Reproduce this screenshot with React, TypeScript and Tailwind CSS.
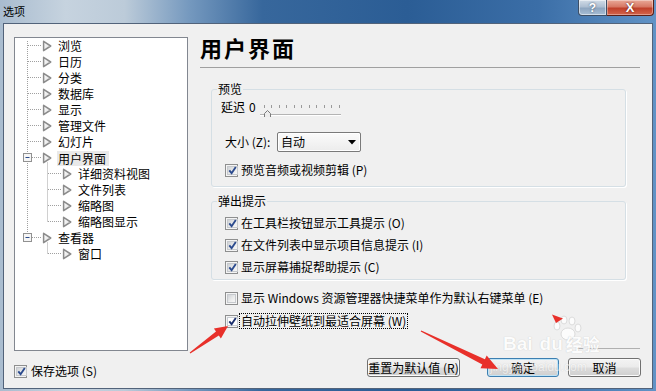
import React from "react";

type Row = { t: string; l: number; sel?: boolean };

const rows: Row[] = [
  { t: "浏览", l: 0 },
  { t: "日历", l: 0 },
  { t: "分类", l: 0 },
  { t: "数据库", l: 0 },
  { t: "显示", l: 0 },
  { t: "管理文件", l: 0 },
  { t: "幻灯片", l: 0 },
  { t: "用户界面", l: 0, sel: true },
  { t: "详细资料视图", l: 1 },
  { t: "文件列表", l: 1 },
  { t: "缩略图", l: 1 },
  { t: "缩略图显示", l: 1 },
  { t: "查看器", l: 0 },
  { t: "窗口", l: 1 },
];

function Tri() {
  return (
    <svg width="10" height="12" viewBox="0 0 10 12" className="shrink-0">
      <defs>
        <linearGradient id="triG" x1="0" y1="0" x2="1" y2="1">
          <stop offset="0" stopColor="#ffffff" />
          <stop offset="1" stopColor="#dcdcdc" />
        </linearGradient>
      </defs>
      <path
        d="M1.6 1.3 L8.7 6 L1.6 10.7 Z"
        fill="url(#triG)"
        stroke="#8c8c8c"
        strokeWidth="1.5"
        strokeLinejoin="round"
      />
    </svg>
  );
}

function TreeLines() {
  const rootRows = [0, 1, 2, 3, 4, 5, 6, 7, 12];
  const childRows = [8, 9, 10, 11, 13];
  const c = (i: number) => i * 16 + 7.5;
  return (
    <svg width="172" height="312" className="absolute left-0 top-0 pointer-events-none">
      <g stroke="#a0a0a0" strokeWidth="1" strokeDasharray="1 1" fill="none">
        <line x1="12.5" y1="3" x2="12.5" y2={c(12)} />
        {rootRows.map((i) => (
          <line key={"r" + i} x1="13" y1={c(i)} x2="26" y2={c(i)} />
        ))}
        <line x1="32.5" y1={c(7) + 5} x2="32.5" y2={c(11)} />
        <line x1="32.5" y1={c(12) + 5} x2="32.5" y2={c(13)} />
        {childRows.map((i) => (
          <line key={"c" + i} x1="33" y1={c(i)} x2="46" y2={c(i)} />
        ))}
      </g>
      {[7, 12].map((i) => (
        <g key={"m" + i}>
          <rect x="8.5" y={c(i) - 4} width="8" height="8" fill="#f6f6f6" stroke="#919191" />
          <line x1="10.5" y1={c(i)} x2="14.5" y2={c(i)} stroke="#2a4a8a" />
        </g>
      ))}
    </svg>
  );
}

function Check({ checked = true, white = false }: { checked?: boolean; white?: boolean }) {
  return (
    <span className="w-[13px] h-[13px] shrink-0 border border-[#8e8f8f] bg-[#f4f4f4] p-[1px] flex">
      <span
        className={
          white
            ? "flex-1 flex items-center justify-center bg-white border border-[#c8cdd3]"
            : "flex-1 flex items-center justify-center bg-[linear-gradient(135deg,#cfd2d6_0%,#eceded_60%,#f6f6f6_100%)] border border-[#c6c9cd]"
        }
      >
        {checked && (
          <svg width="9" height="9" viewBox="0 0 9 9" className="shrink-0">
            <path
              d="M1.3 4.4 L3.6 7.2 L7.8 1"
              fill="none"
              stroke={white ? "#1b2f6d" : "#2c4b8e"}
              strokeWidth="1.9"
            />
          </svg>
        )}
      </span>
    </span>
  );
}

function Group({ title, className, children }: { title: string; className: string; children: React.ReactNode }) {
  return (
    <fieldset
      className={
        "ml-[11px] w-[415px] border border-[#d5dfe5] rounded-[3px] shadow-[1px_1px_0_#ffffff] " + className
      }
    >
      <legend className="ml-[5px] px-[1px] text-[12px] leading-[14px]">{title}</legend>
      {children}
    </fieldset>
  );
}

function Btn({ children, w, def = false }: { children: React.ReactNode; w: string; def?: boolean }) {
  return (
    <div
      className={
        (def
          ? "border-[#3c7fb1] shadow-[inset_0_0_0_1px_#bfe4f7] "
          : "border-[#707070] shadow-[inset_0_0_0_1px_#fbfbfb] ") +
        w +
        " h-[19px] rounded-[3px] border bg-[linear-gradient(#f3f3f3_0%,#ebebeb_48%,#dddddd_52%,#cfcfcf_100%)] flex items-center justify-center text-[12px] leading-none"
      }
    >
      {children}
    </div>
  );
}

function Slider() {
  const ticks = Array.from({ length: 11 }, (_, k) => 4.5 + k * 7.5);
  return (
    <svg width="84" height="20" viewBox="0 0 84 20" className="shrink-0">
      {ticks.map((x, k) => (
        <line key={k} x1={Math.round(x) + 0.5} y1="8" x2={Math.round(x) + 0.5} y2="11" stroke="#9a9a9a" />
      ))}
      <line x1="1" y1="17.5" x2="82" y2="17.5" stroke="#b4b4b4" />
      <line x1="1" y1="18.5" x2="82" y2="18.5" stroke="#ffffff" />
      <path d="M5.5 20.5 L5.5 16.5 L8.5 13.5 L11.5 16.5 L11.5 20.5 Z" fill="#ececec" stroke="#7a7a7a" />
    </svg>
  );
}

function Arrows() {
  return (
    <svg width="656" height="391" className="absolute left-0 top-0 pointer-events-none">
      <polygon
        points="190.3,353.4 218.8,335.5 220.9,338.4 228,326 213.9,328.6 216,331.5 189.7,352.6"
        fill="#e8302a"
      />
      <polygon
        points="421.3,330.4 484.9,359.2 486.7,355.6 498,369 480.5,368.2 482.3,364.6 420.7,331.6"
        fill="#e8302a"
      />
      <polygon points="552,314.5 563,318.5 556,323" fill="#e8302a" />
    </svg>
  );
}

function Watermark() {
  return (
    <div className="absolute left-[503px] top-[314px] pointer-events-none text-white opacity-80">
      <svg width="40" height="28" viewBox="0 0 40 28" className="absolute left-[42px] top-0">
        <g fill="#ffffff" stroke="#d8d8d8" strokeWidth="1">
          <ellipse cx="12" cy="12" rx="3" ry="4" />
          <ellipse cx="19" cy="6" rx="3" ry="4" />
          <ellipse cx="27" cy="7" rx="3" ry="4" />
          <ellipse cx="33" cy="14" rx="3" ry="4" />
          <ellipse cx="23" cy="20" rx="7" ry="6" />
        </g>
      </svg>
      <div className="absolute left-0 top-[20px] flex items-end whitespace-nowrap [text-shadow:0_0_1px_#b8b8b8]">
        <span className="font-['Liberation_Sans',sans-serif] font-bold text-[19px] leading-[20px]">Bai</span>
        <span className="ml-[7px] font-['Liberation_Sans',sans-serif] font-bold text-[19px] leading-[20px]">du</span>
        <span className="ml-[3px] text-[17px] leading-[20px] font-bold">经验</span>
      </div>
      <div className="absolute left-[-13px] top-[46px] whitespace-nowrap font-['Liberation_Sans',sans-serif] text-[12px] leading-[14px] opacity-70 [text-shadow:0_0_1px_#b0b0b0]">
        jingyan.baidu.com
      </div>
    </div>
  );
}

export default function App() {
  return (
    <div className="relative w-[656px] h-[391px] overflow-hidden flex flex-col font-['Noto_Sans_CJK_SC','Liberation_Sans',sans-serif] text-[12px] text-black bg-[linear-gradient(90deg,#a9bccf_0%,#c6d3df_10%,#bccbd9_19%,#7498be_29%,#37679c_40%,#2b5d95_62%,#3b6ea7_82%,#6193c6_100%)]">
      {/* title bar */}
      <div className="h-[23px] shrink-0 flex items-start justify-between">
        <div className="pl-[3px] pt-[3px] text-[11px] leading-[16px]">选项</div>
        <div className="flex mr-[2px]">
          <div className="w-[29px] h-[16px] border border-[#3d4f66] border-t-0 rounded-bl-[4px] bg-[linear-gradient(#d2dce7_0%,#aebfd2_45%,#8ea6c0_55%,#a7bdd4_100%)] shadow-[inset_0_0_0_1px_rgba(255,255,255,0.5)] flex items-center justify-center text-white font-bold text-[12px] leading-none font-['Liberation_Sans',sans-serif] [text-shadow:0_0_2px_#33475e]">
            ?
          </div>
          <div className="w-[47px] h-[16px] border border-[#5a1f16] border-t-0 border-l-0 rounded-br-[4px] bg-[linear-gradient(#e9a998_0%,#d77864_45%,#c0402a_55%,#d3654c_100%)] shadow-[inset_0_0_0_1px_rgba(255,255,255,0.35)] flex items-center justify-center text-white font-bold text-[13px] leading-none font-['Liberation_Sans',sans-serif] [text-shadow:0_0_2px_#4a130b]">
            X
          </div>
        </div>
      </div>

      {/* body */}
      <div className="mx-[3px] h-[366px] shrink-0 border border-[#52637a] bg-[#f0f0f0] flex">
        {/* left column */}
        <div className="pl-[10px] pt-[13px] flex flex-col">
          <div className="relative w-[174px] h-[314px] border border-[#828790] bg-white">
            <TreeLines />
            <div className="relative flex flex-col">
              {rows.map((r, i) => (
                <div
                  key={i}
                  className={(r.l === 0 ? "pl-[27px]" : "pl-[47px]") + " h-[16px] flex items-center whitespace-nowrap"}
                >
                  <Tri />
                  {r.sel ? (
                    <span className="ml-[5px] pl-[1px] pr-[3px] h-[15px] bg-[#e9e9e9] leading-[15px]">{r.t}</span>
                  ) : (
                    <span className="ml-[6px] leading-[16px]">{r.t}</span>
                  )}
                </div>
              ))}
            </div>
          </div>
          <div className="mt-[12px] h-[16px] flex items-center">
            <Check />
            <span className="ml-[4px] leading-[16px]">保存选项 (S)</span>
          </div>
        </div>

        {/* right column */}
        <div className="ml-[12px] pt-[11px] w-[441px] flex flex-col">
          <div className="h-[24px] text-[22px] leading-[24px] font-bold tracking-[2px]">用户界面</div>
          <div className="mt-[8px] h-px w-[440px] bg-[#a0a0a0]" />

          <Group title="预览" className="mt-[14px]">
            <div className="pl-[9px] pt-[1px] pb-[8px] flex flex-col">
              <div className="h-[20px] flex items-center">
                <span className="leading-[16px]">延迟</span>
                <span className="ml-[4px] leading-[16px]">0</span>
                <span className="ml-[3px] flex">
                  <Slider />
                </span>
              </div>
              <div className="mt-[15px] h-[20px] flex items-center pl-[4px]">
                <span className="w-[52px] leading-[16px] whitespace-nowrap">大小 (Z):</span>
                <div className="w-[84px] h-[20px] border border-[#7a7a7a] rounded-[2px] bg-[linear-gradient(#fbfbfb,#ececec)] shadow-[inset_0_0_0_1px_#ffffff] flex items-center justify-between pl-[3px] pr-[4px]">
                  <span className="leading-[16px]">自动</span>
                  <svg width="8" height="5" viewBox="0 0 8 5">
                    <path d="M0 0 L8 0 L4 4.5 Z" fill="#000" />
                  </svg>
                </div>
              </div>
              <div className="mt-[10px] h-[16px] flex items-center pl-[4px]">
                <Check />
                <span className="ml-[3px] leading-[16px]">预览音频或视频剪辑 (P)</span>
              </div>
            </div>
          </Group>

          <Group title="弹出提示" className="mt-[7px]">
            <div className="pl-[13px] pt-[4px] pb-[1px] flex flex-col">
              <div className="h-[22px] flex items-center">
                <Check />
                <span className="ml-[3px] leading-[16px]">在工具栏按钮显示工具提示 (O)</span>
              </div>
              <div className="h-[22px] flex items-center">
                <Check />
                <span className="ml-[3px] leading-[16px]">在文件列表中显示项目信息提示 (I)</span>
              </div>
              <div className="h-[22px] flex items-center">
                <Check />
                <span className="ml-[3px] leading-[16px]">显示屏幕捕捉帮助提示 (C)</span>
              </div>
            </div>
          </Group>

          <div className="mt-[8px] h-[20px] pl-[25px] flex items-center whitespace-nowrap">
            <Check checked={false} />
            <span className="ml-[3px] leading-[16px]">显示 Windows 资源管理器快捷菜单作为默认右键菜单 (E)</span>
          </div>
          <div className="mt-[3px] h-[20px] pl-[25px] flex items-center whitespace-nowrap">
            <Check white />
            <span className="ml-[1px] pl-[1px] pr-[1px] border border-dotted border-black leading-[14px]">
              自动拉伸壁纸到最适合屏幕 (W)
            </span>
          </div>

          <div className="mt-[17px] ml-[377px] h-px w-[63px] bg-[#b0b0b0]" />

          <div className="mt-[9px] flex justify-end">
            <Btn w="w-[93px]">重置为默认值 (R)</Btn>
            <div className="ml-[27px]">
              <Btn w="w-[72px]" def>
                确定
              </Btn>
            </div>
            <div className="ml-[9px]">
              <Btn w="w-[73px]">取消</Btn>
            </div>
          </div>
        </div>
      </div>

      <Watermark />
      <Arrows />
    </div>
  );
}
